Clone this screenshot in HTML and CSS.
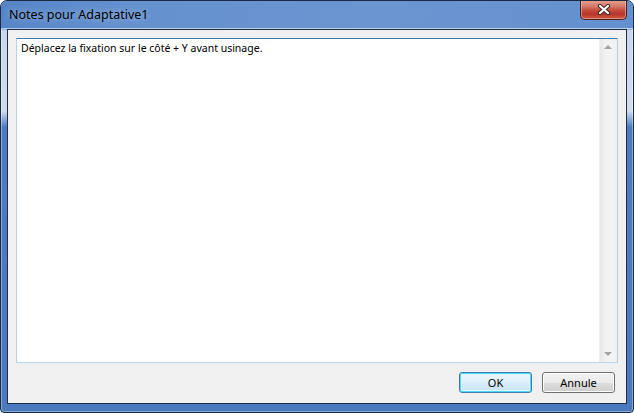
FILE: index.html
```html
<!DOCTYPE html>
<html>
<head>
<meta charset="utf-8">
<link rel="stylesheet" href="styles.css">
</head>
<body>
<div class="window">
  <div class="titlebar">
    <span class="title">Notes pour Adaptative1</span>
    <div class="close">
      <svg width="14" height="11" viewBox="0 0 14 11">
        <path d="M3 2 L11 9 M11 2 L3 9" stroke="#3a2a2a" stroke-width="4.2" stroke-linecap="round"/>
        <path d="M3 2 L11 9 M11 2 L3 9" stroke="#ffffff" stroke-width="2.2" stroke-linecap="round"/>
      </svg>
    </div>
  </div>
  <div class="client">
    <div class="editor">
      <div class="text">Déplacez la fixation sur le côté + Y avant usinage.</div>
      <div class="scrollbar">
        <div class="arrow up"></div>
        <div class="track"></div>
        <div class="arrow down"></div>
      </div>
    </div>
    <div class="buttons">
      <button class="btn default">OK</button>
      <button class="btn">Annule</button>
    </div>
  </div>
</div>
</body>
</html>
```
FILE: styles.css
```css
html, body {
  margin: 0;
  padding: 0;
  background: #ffffff;
}
.window {
  position: relative;
  width: 634px;
  height: 413px;
  box-sizing: border-box;
  border: 1px solid #1b2a40;
  border-radius: 7px 7px 4px 4px;
  padding: 0 6px 8px 6px;
  display: flex;
  flex-direction: column;
  background: linear-gradient(to bottom, #5d89c9 0px, #6390cf 28px, #c9d7ea 29px, #d0dcec 110px, #4d7bbf 126px, #4b79bd 100%);
  box-shadow: inset 0 0 0 1px rgba(255,255,255,0.35);
  overflow: hidden;
}
.titlebar {
  height: 28px;
  flex: none;
  display: flex;
  align-items: flex-start;
  background: linear-gradient(100deg, #5684c7 0%, #6591cf 20%, #6b95d1 60%, #6590cf 100%);
  margin: 0 -6px;
  padding: 0 8px;
  border-bottom: 1px solid rgba(255,255,255,0.55);
  box-sizing: border-box;
}
.title {
  font-family: "Noto Sans", "Open Sans", sans-serif;
  font-size: 12.5px;
  color: #000;
  line-height: 18px;
  margin-top: 5px;
  text-shadow: 0 0 6px rgba(255,255,255,0.5);
}
.close {
  position: absolute;
  top: -1px;
  right: 6px;
  width: 47px;
  height: 20px;
  box-sizing: border-box;
  border: 1px solid #4a1e1a;
  border-top: none;
  border-radius: 0 0 5px 5px;
  background: linear-gradient(to bottom, #e7a494 0%, #d47766 35%, #c44a3a 55%, #b7372a 75%, #d25a46 100%);
  box-shadow: inset 0 0 0 1px rgba(255,210,200,0.45);
  display: flex;
  align-items: center;
  justify-content: center;
}
.close svg { display: block; }
.client {
  flex: 1;
  border: 1px solid #1f2e46;
  background: #f0f0f0;
  display: flex;
  flex-direction: column;
  padding: 8px 11px 10px 8px;
}
.editor {
  flex: 1;
  margin-right: -3px;
  display: flex;
  background: #fff;
  border: 1px solid #b5cfe7;
  border-top-color: #3d7bad;
  border-bottom-color: #b7d9ed;
}
.text {
  flex: 1;
  font-family: "Noto Sans", "Open Sans", sans-serif;
  font-size: 10.5px;
  line-height: 15px;
  color: #000;
  padding: 2px 4px;
}
.scrollbar {
  width: 17px;
  display: flex;
  flex-direction: column;
  background: linear-gradient(to right, #e7e7e7 0%, #f1f1f1 30%, #f3f3f3 70%, #f0f0f0 100%);
  border-left: 1px solid #ececec;
}
.arrow {
  height: 17px;
  position: relative;
}
.arrow::after {
  content: "";
  position: absolute;
  left: 4px;
  width: 0;
  height: 0;
  border-left: 4px solid transparent;
  border-right: 4px solid transparent;
}
.arrow.up::after {
  top: 6px;
  border-bottom: 4px solid #a3a3a3;
}
.arrow.down::after {
  top: 7px;
  border-top: 4px solid #a3a3a3;
}
.track { flex: 1; }
.buttons {
  flex: none;
  display: flex;
  justify-content: flex-end;
  gap: 10px;
  margin-top: 9px;
}
.btn {
  width: 73px;
  height: 21px;
  box-sizing: border-box;
  border: 1px solid #707070;
  border-radius: 3px;
  background: linear-gradient(to bottom, #f2f2f2 0%, #ebebeb 50%, #dddddd 51%, #cfcfcf 100%);
  box-shadow: inset 0 0 0 1px #fcfcfc;
  font-family: "Noto Sans", "Open Sans", sans-serif;
  font-size: 11px;
  color: #000;
  padding: 0;
  line-height: 17px;
}
.btn.default {
  border-color: #3c7fb1;
  box-shadow: inset 0 0 0 1px #48d8fb, inset 0 0 0 2px #e6f6fd;
  background: linear-gradient(to bottom, #eaf6fd 0%, #e0f0fa 50%, #d6ecf9 51%, #c8e3f6 100%);
}
```
